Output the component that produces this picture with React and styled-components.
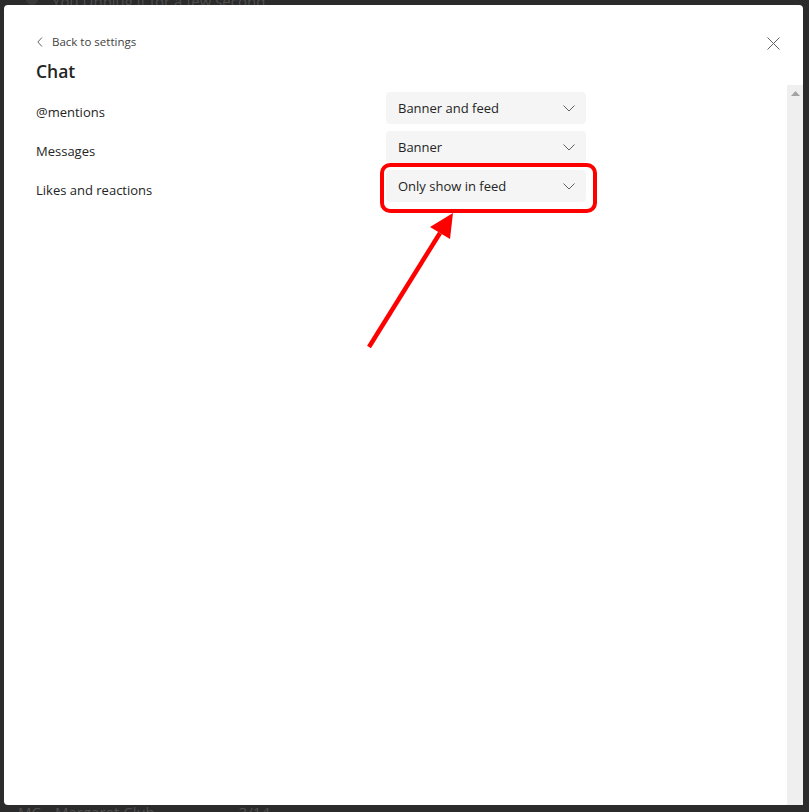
import React from "react";
import styled, { createGlobalStyle } from "styled-components";

const GlobalStyle = createGlobalStyle`
  html, body {
    margin: 0;
    padding: 0;
    background: #2b2b2b;
  }
  body {
    font-family: "Open Sans", "Noto Sans", sans-serif;
    color: #242424;
  }
`;

const Page = styled.div`
  width: 809px;
  height: 812px;
  display: flex;
  flex-direction: column;
  background: #2b2b2b;
  overflow: hidden;
`;

// strips of the chat list that peek out round the dialog
const Peek = styled.div`
  height: ${p => p.h}px;
  overflow: hidden;
  display: flex;
  align-items: ${p => (p.top ? "flex-end" : "flex-start")};
  gap: 14px;
  padding-left: 26px;
  color: #4e4e4e;
  font-family: "Open Sans", sans-serif;
  font-size: 15px;
  line-height: ${p => (p.top ? 8 : 14)}px;
`;

const PeekText = styled.span`
  white-space: nowrap;
  margin-left: ${p => p.ml || 0}px;
`;

const Dialog = styled.div`
  margin-left: 4px;
  width: 799px;
  height: 800px;
  background: #ffffff;
  border-radius: 4px;
  display: flex;
  flex-direction: column;
  position: relative;
`;

const Header = styled.div`
  height: 80px;
  padding: 29px 0 0 32px;
  box-sizing: border-box;
  display: flex;
  flex-direction: column;
  gap: 9px;
`;

const BackLink = styled.button`
  all: unset;
  display: flex;
  align-items: center;
  gap: 9px;
  padding-left: 1px;
  font-family: "Open Sans", sans-serif;
  font-size: 11.5px;
  line-height: 16px;
  color: #424242;
  cursor: pointer;
`;

const Title = styled.h2`
  margin: 0;
  font-family: "Open Sans", sans-serif;
  font-size: 17.5px;
  font-weight: 600;
  line-height: 24px;
  color: #242424;
`;

const CloseButton = styled.button`
  all: unset;
  position: absolute;
  top: 24px;
  right: 16px;
  width: 28px;
  height: 28px;
  display: flex;
  align-items: center;
  justify-content: center;
  cursor: pointer;
`;

const Body = styled.div`
  flex: 1;
  display: flex;
  min-height: 0;
`;

const Content = styled.div`
  flex: 1;
  padding: 7px 0 0 32px;
  display: flex;
  flex-direction: column;
  gap: 7px;
`;

const Row = styled.div`
  display: grid;
  grid-template-columns: 350px 200px;
  align-items: start;
`;

const Label = styled.div`
  padding-top: 10px;
  font-size: 13px;
  line-height: 20px;
  color: #242424;
`;

const Select = styled.div`
  height: 32px;
  box-sizing: border-box;
  padding: 0 11px 0 12px;
  background: #f5f5f5;
  border-radius: 4px;
  display: flex;
  align-items: center;
  justify-content: space-between;
  font-size: 13px;
  color: #242424;
  position: relative;

  ${p =>
    p.highlighted &&
    `
    &::after {
      content: "";
      position: absolute;
      top: -7px;
      left: -6px;
      right: -11px;
      bottom: -11px;
      border: 4px solid #ff0000;
      border-radius: 10px;
      pointer-events: none;
    }
  `}
`;

const Scrollbar = styled.div`
  width: 16px;
  background: #efefef;
  display: flex;
  justify-content: center;
  padding-top: 6px;
  box-sizing: border-box;
`;

const Annotation = styled.svg`
  position: absolute;
  left: 351px;
  top: 200px;
  overflow: visible;
`;

const Chevron = () => (
  <svg width="12" height="7" viewBox="0 0 12 7">
    <path d="M0.5 0.5 L6 6 L11.5 0.5" fill="none" stroke="#616161" strokeWidth="1" />
  </svg>
);

const rows = [
  { label: "@mentions", value: "Banner and feed" },
  { label: "Messages", value: "Banner" },
  { label: "Likes and reactions", value: "Only show in feed", highlighted: true }
];

function App() {
  return (
    <Page>
      <GlobalStyle />
      <Peek h={5} top>
        <svg width="12" height="12" viewBox="0 0 12 12">
          <circle cx="6" cy="6" r="6" fill="#3a3a3a" />
        </svg>
        <PeekText>You Unplug it for a few second</PeekText>
      </Peek>
      <Dialog>
        <Header>
          <BackLink>
            <svg width="6" height="10" viewBox="0 0 6 10">
              <path d="M5 0.5 L0.8 5 L5 9.5" fill="none" stroke="#616161" strokeWidth="1" />
            </svg>
            Back to settings
          </BackLink>
          <Title>Chat</Title>
        </Header>
        <CloseButton aria-label="Close">
          <svg width="13" height="13" viewBox="0 0 13 13">
            <path d="M0.5 0.5 L12.5 12.5 M12.5 0.5 L0.5 12.5" stroke="#616161" strokeWidth="1" />
          </svg>
        </CloseButton>
        <Body>
          <Content>
            {rows.map(r => (
              <Row key={r.label}>
                <Label>{r.label}</Label>
                <Select highlighted={r.highlighted}>
                  {r.value}
                  <Chevron />
                </Select>
              </Row>
            ))}
          </Content>
          <Scrollbar>
            <svg width="9" height="5" viewBox="0 0 9 5">
              <path d="M0 5 L4.5 0 L9 5 Z" fill="#a3a3a3" />
            </svg>
          </Scrollbar>
        </Body>
        <Annotation width="110" height="155" viewBox="0 0 110 155">
          <line x1="14" y1="142" x2="85" y2="28" stroke="#ff0000" strokeWidth="4.5" />
          <path d="M98 8 L75 22 L95 34 Z" fill="#ff0000" />
        </Annotation>
      </Dialog>
      <Peek h={7}>
        <PeekText ml={-8}>MC</PeekText>
        <PeekText>Margaret Club</PeekText>
        <PeekText ml={70}>3/14</PeekText>
      </Peek>
    </Page>
  );
}

export default App;
